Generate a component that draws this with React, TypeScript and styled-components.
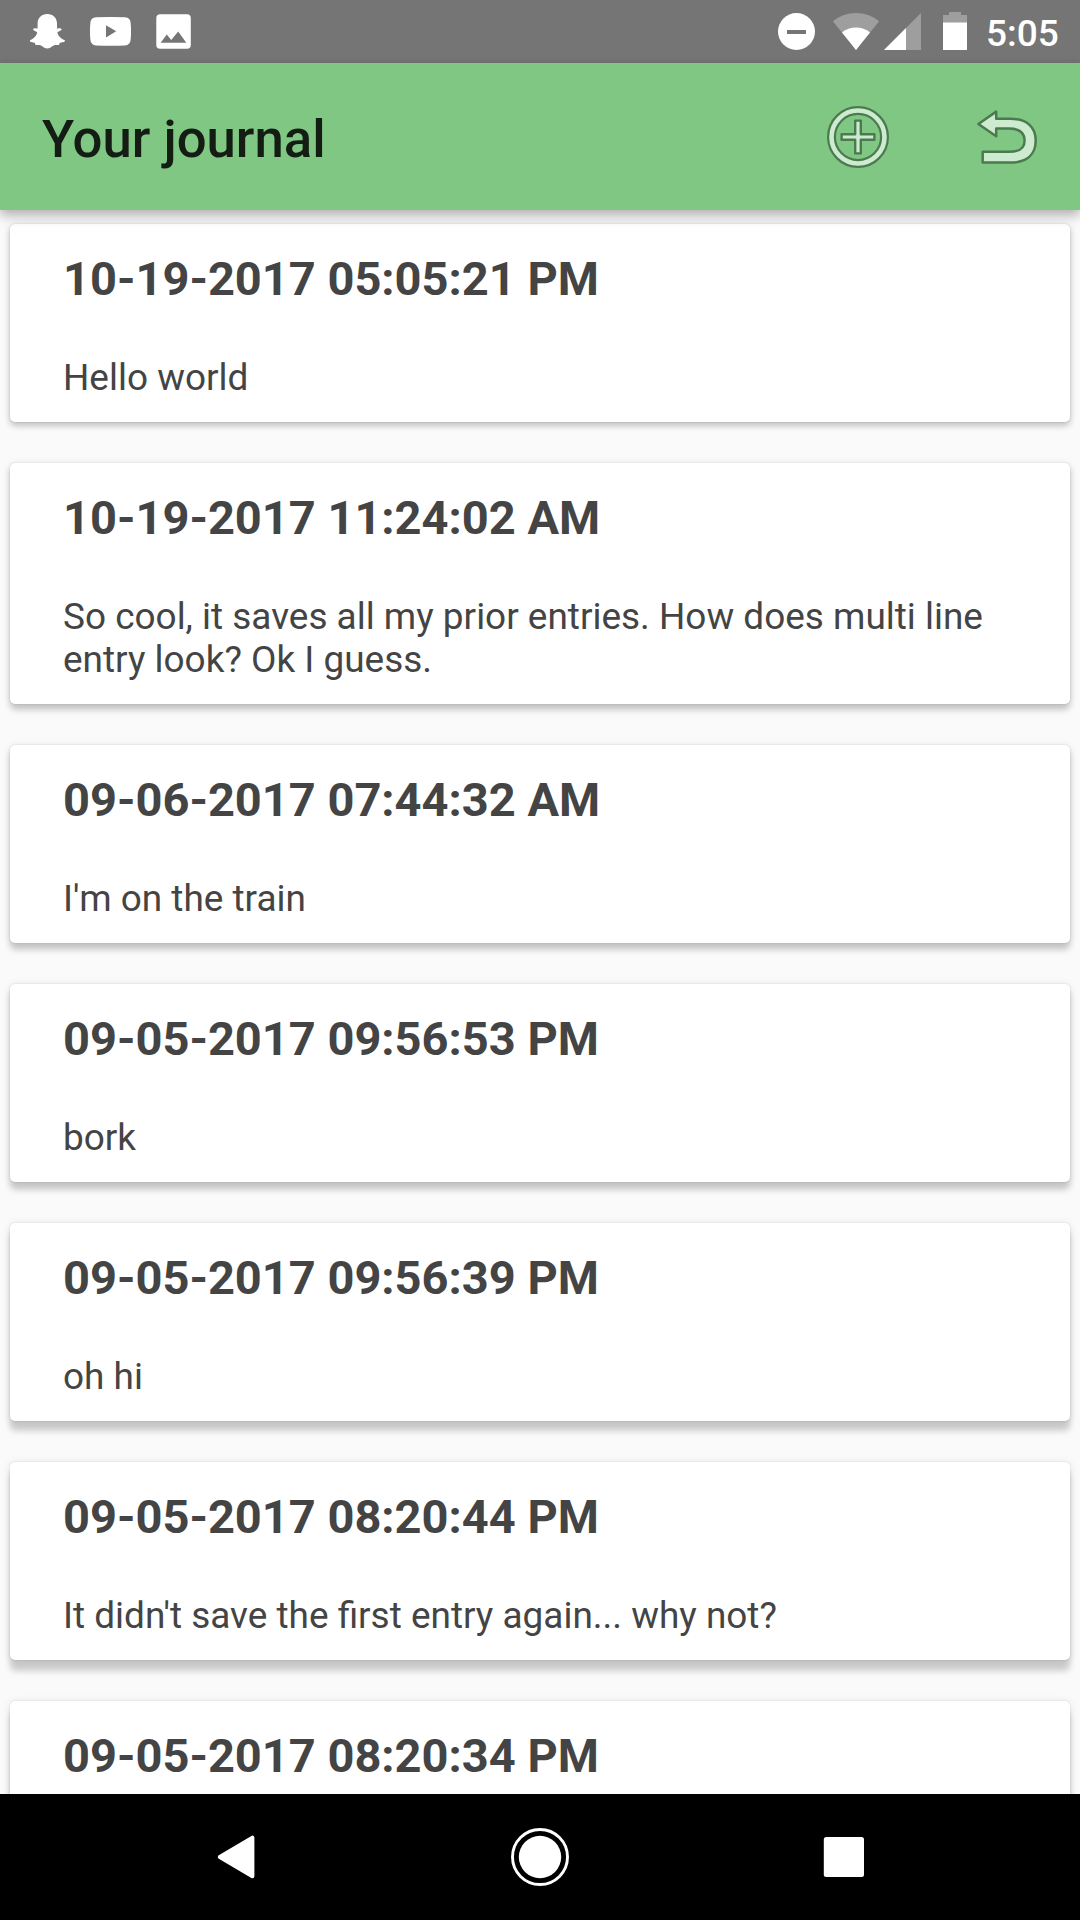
import React from "react";
import styled, { createGlobalStyle } from "styled-components";

const GlobalStyle = createGlobalStyle`
  *, *::before, *::after { box-sizing: border-box; }
  body { margin: 0; background: #fafafa; font-family: Roboto, "Noto Sans", sans-serif; }
`;

const Screen = styled.div`
  width: 1080px;
  height: 1920px;
  display: flex;
  flex-direction: column;
  overflow: hidden;
  background: #fafafa;
`;

const StatusBar = styled.header`
  flex: none;
  height: 63px;
  padding: 0 22px 0 28px;
  display: flex;
  align-items: center;
  justify-content: space-between;
  background: #757575;
`;

const IconGroup = styled.div<{ $gap: number }>`
  display: flex;
  align-items: center;
  gap: ${(p) => p.$gap}px;
`;

const Glyph = styled.svg<{ $after?: number }>`
  display: block;
  flex: none;
  margin-right: ${(p) => p.$after ?? 0}px;
`;

const Clock = styled.span`
  width: 72px;
  padding-top: 4px;
  font-size: 37px;
  line-height: 43px;
  font-weight: 500;
  color: #fff;
  white-space: nowrap;
`;

const AppBar = styled.div`
  flex: none;
  height: 147px;
  padding: 0 40px 0 42px;
  display: flex;
  align-items: center;
  justify-content: space-between;
  background: #81c784;
  box-shadow: 0 4px 10px rgba(0, 0, 0, 0.22), 0 8px 14px rgba(0, 0, 0, 0.1);
  z-index: 1;
`;

const Title = styled.h1`
  margin: 0;
  padding-top: 5px;
  font-size: 52.7px;
  line-height: 62px;
  font-weight: 500;
  color: #131d13;
`;

const Entries = styled.main`
  flex: 1;
  min-height: 0;
  overflow: hidden;
  padding: 14px 10px 0;
  display: flex;
  flex-direction: column;
  gap: 41px;
`;

const Card = styled.article<{ $depth: number }>`
  flex: none;
  padding: 27px 53px 23px;
  border-radius: 5px;
  background: #fff;
  color: #444;
  box-shadow:
    0 0 2px rgba(0, 0, 0, 0.14),
    0 1px 10px rgba(0, 0, 0, 0.09),
    0 ${(p) => p.$depth}px 6px rgba(0, 0, 0, 0.18);
`;

const Stamp = styled.h2`
  margin: 0 0 50px;
  font-size: 47px;
  line-height: 55px;
  font-weight: 700;
  white-space: nowrap;
`;

const Body = styled.p`
  margin: 0;
  font-size: 36.95px;
  line-height: 43px;
`;

const NavBar = styled.nav`
  flex: none;
  height: 126px;
  padding: 0 206px;
  display: flex;
  align-items: center;
  justify-content: space-between;
  background: #000;
  z-index: 1;
`;

const entries = [
  { stamp: "10-19-2017 05:05:21 PM", text: "Hello world" },
  {
    stamp: "10-19-2017 11:24:02 AM",
    text: "So cool, it saves all my prior entries. How does multi line entry look? Ok I guess.",
  },
  { stamp: "09-06-2017 07:44:32 AM", text: "I'm on the train" },
  { stamp: "09-05-2017 09:56:53 PM", text: "bork" },
  { stamp: "09-05-2017 09:56:39 PM", text: "oh hi" },
  { stamp: "09-05-2017 08:20:44 PM", text: "It didn't save the first entry again... why not?" },
  { stamp: "09-05-2017 08:20:34 PM", text: "" },
];

const Snapchat = () => (
  <Glyph $after={23} width="38" height="63" viewBox="28 0 38 63" fill="#fff">
    <path d="M47.3 14C41.5 14 37.6 18 37.6 23.5V28.4C36 28.6 33.9 27.7 33.2 28.9C32.6 30.2 35.6 31.2 37.2 32C37 35.5 33.8 38.5 30.2 40.3C29 41.2 30.5 42.3 34.7 42.7L35.6 45.1C38.8 44.8 40.6 45 42.6 46.6C44 47.8 45.4 48.5 47.3 48.5C49.2 48.5 50.6 47.8 52 46.6C54 45 55.8 44.8 59 45.1L59.9 42.7C64.1 42.3 65.9 41.2 64.6 40.3C60.8 38.5 57.6 35.5 57.4 32C59 31.2 62.2 30.2 61.5 28.9C60.8 27.7 58.6 28.6 57 28.4V23.5C57 18 53.1 14 47.3 14Z" />
  </Glyph>
);

const YouTube = () => (
  <Glyph $after={25} width="42" height="63" viewBox="89 0 42 63">
    <path
      fill="#fff"
      fillRule="evenodd"
      d="M96 17.2Q110 16.6 125 17.2Q130.1 17.5 130.6 22.5Q131.5 31 130.6 40Q130.1 45 125 45.4Q110 46.1 96 45.4Q91 45 90.4 40Q89.5 31 90.4 22.5Q91 17.5 96 17.2ZM106 25.3V37.4L116.2 31.3Z"
    />
  </Glyph>
);

const Picture = () => (
  <Glyph width="35" height="63" viewBox="156 0 35 63">
    <rect x="156.3" y="14.2" width="34.5" height="34.5" rx="3.8" fill="#fff" />
    <path d="M160.6 42.8L166.8 34.5L171.2 39.9L178.2 31.5L186.3 42.8Z" fill="#757575" />
  </Glyph>
);

const DoNotDisturb = () => (
  <Glyph $after={17} width="38" height="63" viewBox="777 0 38 63">
    <circle cx="796.5" cy="31.5" r="18.5" fill="#fff" />
    <rect x="787" y="30" width="19" height="4" fill="#757575" />
  </Glyph>
);

const Wifi = () => (
  <Glyph $after={4} width="48" height="63" viewBox="832 0 48 63">
    <path d="M856 50L832.9 21.3Q843 13 856 13Q869 13 879.1 21.3Z" fill="#9e9e9e" />
    <path d="M856 50L842 32.5Q848 27.6 856 27.6Q864 27.6 870 32.5Z" fill="#fff" />
  </Glyph>
);

const Signal = () => (
  <Glyph $after={22} width="37" height="63" viewBox="884 0 37 63">
    <path d="M884 50L921 13V50Z" fill="#9e9e9e" />
    <path d="M884 50L906 28V50Z" fill="#fff" />
  </Glyph>
);

const Battery = () => (
  <Glyph $after={19} width="24" height="63" viewBox="943 0 24 63">
    <path d="M943 15H949V12H961V15H967V50H943Z" fill="#9e9e9e" />
    <path d="M943 22.5H967V50H943Z" fill="#fff" />
  </Glyph>
);

const AddIcon = () => (
  <Glyph width="64" height="64" viewBox="-32 -32 64 64" fill="none">
    <circle r="26.5" stroke="#4c7a4f" strokeWidth="9" />
    <circle r="26.5" stroke="#cdebcf" strokeWidth="4.6" />
    <path
      d="M-16.4 -2.8H-2.8V-16.4H2.8V-2.8H16.4V2.8H2.8V16.4H-2.8V2.8H-16.4Z"
      fill="#cdebcf"
      stroke="#4c7a4f"
      strokeWidth="2.4"
      strokeLinejoin="round"
    />
  </Glyph>
);

const BackIcon = () => (
  <Glyph width="64" height="64" viewBox="976 104.5 64 64">
    <path
      d="M978.4 123.5L996.2 111.1V118.2H1010C1027 118.2 1035.7 126.8 1035.7 140.1C1035.7 153.8 1027 162.1 1010 162.1H982.7V151.3H1009C1019.5 151.3 1024.6 148.3 1024.6 140.1C1024.6 131.8 1019.5 128.1 1009 128.1H996.2V135.8Z"
      fill="#cdebcf"
      stroke="#4c7a4f"
      strokeWidth="2.5"
      strokeLinejoin="round"
    />
  </Glyph>
);

const NavBack = () => (
  <Glyph width="60" height="60" viewBox="206 1827 60 60">
    <path d="M219.8 1857L252.4 1837.7V1876.3Z" fill="#fff" stroke="#fff" strokeWidth="4" strokeLinejoin="round" />
  </Glyph>
);

const NavHome = () => (
  <Glyph width="60" height="60" viewBox="-30 -30 60 60">
    <circle r="27.5" fill="none" stroke="#fff" strokeWidth="2.9" />
    <circle r="21.2" fill="#fff" />
  </Glyph>
);

const NavRecent = () => (
  <Glyph width="60" height="60" viewBox="814 1827 60 60">
    <rect x="823.8" y="1837" width="40.2" height="40" rx="2.5" fill="#fff" />
  </Glyph>
);

export default function App() {
  return (
    <>
      <GlobalStyle />
      <Screen>
        <StatusBar>
          <IconGroup $gap={0}>
            <Snapchat />
            <YouTube />
            <Picture />
          </IconGroup>
          <IconGroup $gap={0}>
            <DoNotDisturb />
            <Wifi />
            <Signal />
            <Battery />
            <Clock>5:05</Clock>
          </IconGroup>
        </StatusBar>
        <AppBar>
          <Title>Your journal</Title>
          <IconGroup $gap={86}>
            <AddIcon />
            <BackIcon />
          </IconGroup>
        </AppBar>
        <Entries>
          {entries.map((entry, i) => (
            <Card key={entry.stamp} $depth={4 + i * 1.3}>
              <Stamp>{entry.stamp}</Stamp>
              <Body>{entry.text}</Body>
            </Card>
          ))}
        </Entries>
        <NavBar>
          <NavBack />
          <NavHome />
          <NavRecent />
        </NavBar>
      </Screen>
    </>
  );
}
